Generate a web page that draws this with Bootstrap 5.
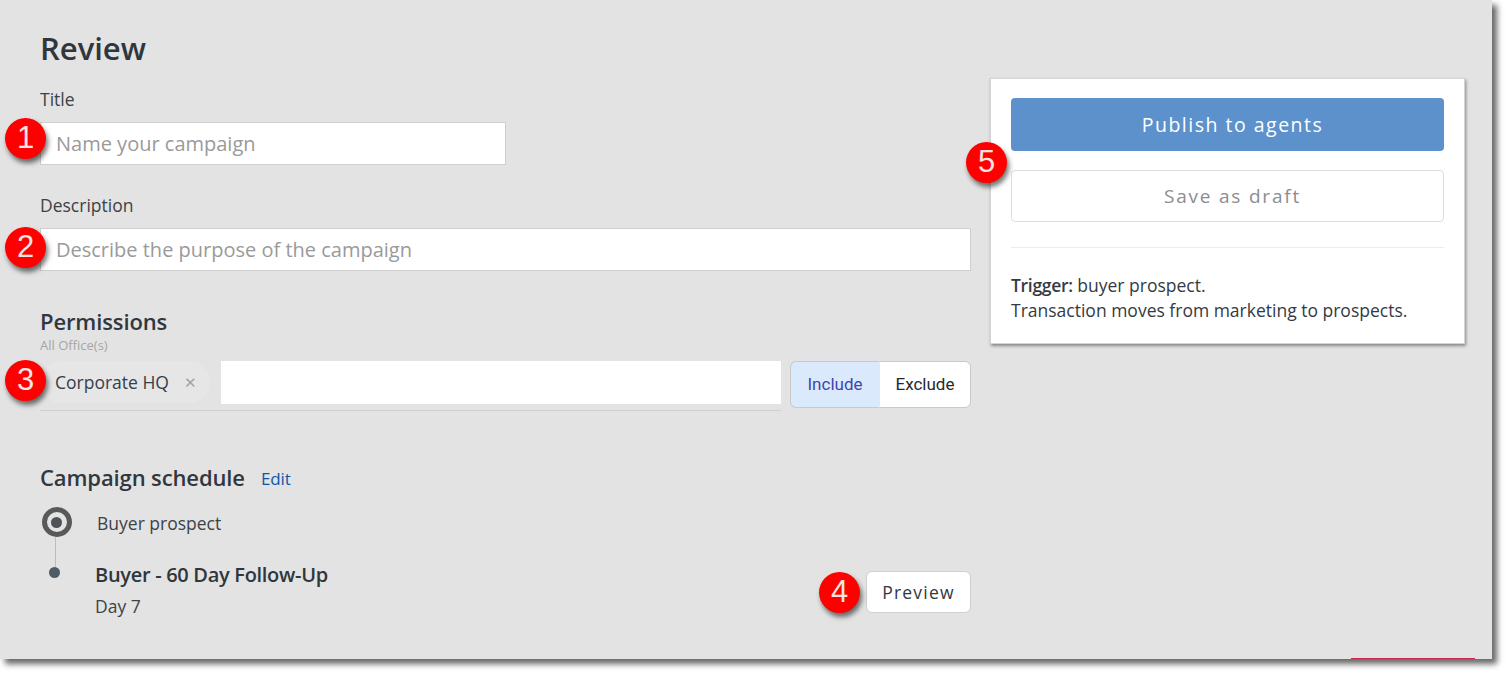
<!DOCTYPE html>
<html lang="en">
<head>
  <meta charset="UTF-8">
  <title>Review</title>
  <meta name="viewport" content="width=device-width, initial-scale=1">
  <link href="https://cdn.jsdelivr.net/npm/bootstrap@5.3.2/dist/css/bootstrap.min.css" rel="stylesheet">
  <style>
    html, body { height: 100%; }
    body { background: #fff; font-family: "Open Sans", sans-serif; color: #333a40; overflow: hidden; }
    .sheet { position: relative; width: 1492px; height: 659px; background: #e3e3e3; box-shadow: 5px 5px 6px rgba(0,0,0,.6); padding: 28px 0 0 40px; gap: 19px; }
    .left-col { width: 931px; }
    .page-title { font-size: 31px; font-weight: 600; line-height: 41px; margin: 0 0 18px; color: #2f373d; }
    .field-label { font-size: 17.5px; line-height: 24px; margin: 0 0 11px; color: #3d4145; display: block; }
    .plain-input { height: 43px; border: 1px solid #cfcfcf; border-radius: 0; font-size: 20px; padding: 0 15px; font-family: "Open Sans", sans-serif; box-shadow: none; }
    .plain-input::placeholder { color: #9a9a9a; opacity: 1; }
    .w-title { width: 466px; margin-bottom: 28px; }
    .w-desc { width: 100%; margin-bottom: 35px; }
    .sect-title { font-size: 22px; font-weight: 600; line-height: 30px; letter-spacing: -.12px; margin: 0; color: #30383e; }
    .sub-note { font-size: 13px; line-height: 15px; color: #a6a6a6; margin-bottom: 8px; margin-top: 2px; }
    .picker { width: 741px; height: 50px; border-bottom: 1px solid #cfcfcf; }
    .chip { height: 42px; width: 170px; background: #e6e6e6; border-radius: 21px; font-size: 17.5px; padding: 0 0 0 15px; color: #333f4a; flex: none; }
    .chip-x { color: #a3a3a3; font-size: 15px; margin-left: 15px; line-height: 1; }
    .picker-box { height: 43px; background: #fff; flex: 1; margin-left: 11px; }
    .mode-group .btn { font-family: Roboto, sans-serif; font-size: 17px; height: 47px; padding: 0; background: #fff; border-color: #c9c9c9; color: #26292c; }
    .mode-group .btn.active { background: #dbe9fd; color: #3a47ad; border-color: #c9c9c9; border-right-color: #dbe9fd; width: 90px; }
    .mode-group .btn.other { width: 92px; }
    .sched-head { margin-top: 51px; margin-bottom: 15px; }
    .edit-link { font-size: 17px; font-weight: 500; color: #0e57a8; text-decoration: none; margin: 3px 0 0 16px; letter-spacing: -.1px; }
    .rail { width: 31px; flex: none; }
    .rail-first { margin-left: 1px; }
    .ring { width: 30px; height: 30px; border: 5px solid #58595b; border-radius: 50%; }
    .ring span { width: 11px; height: 11px; background: #4f5257; border-radius: 50%; display: block; }
    .rail-line { width: 1px; height: 31px; background: #bdbdbd; margin-left: -3px; }
    .dot-step { width: 11px; height: 11px; background: #4f5b66; border-radius: 50%; margin: 6px 0 0 -2px; }
    .trig-name { font-size: 17.5px; line-height: 24px; margin-left: 25px; margin-top: 4px; color: #3e4246; }
    .step-row { margin-top: -7px; }
    .step-name { font-size: 20px; font-weight: 600; line-height: 28px; letter-spacing: -.3px; margin-left: 24px; color: #30363c; }
    .step-day { font-size: 17.5px; line-height: 24px; margin: 5px 0 0 24px; color: #3e4246; }
    .preview-btn { width: 105px; height: 42px; margin-top: 10px; background: #fff; border: 1px solid #cfcfcf; font-size: 17.5px; letter-spacing: 1.2px; color: #33383d; padding: 0; }
    .side-card { width: 475px; height: 266px; margin-top: 50px; border: 1px solid #d4d4d4; border-radius: 0; box-shadow: 1px 2px 3px rgba(0,0,0,.4); padding: 19px 20px; }
    .btn-publish { height: 53px; width: 100%; padding: 0 0 0 10px; background: #5d91cc; color: #fff; border: 0; font-size: 19.5px; font-weight: 500; letter-spacing: 1.5px; border-radius: 4px; }
    .btn-publish:hover { background: #5d91cc; color: #fff; }
    .btn-draft { height: 52px; width: 100%; margin-top: 19px; padding: 0 0 0 10px; background: #fff; color: #8a8d90; border: 1px solid #dedede; font-size: 19px; letter-spacing: 1.8px; border-radius: 4px; }
    .side-rule { margin: 25px 0 25px; border-color: #ececec; opacity: 1; }
    .side-text { font-size: 17.5px; line-height: 25px; color: #333a44; }
    .side-text strong { font-weight: 600; letter-spacing: -.3px; }
    .callout { position: absolute; width: 41px; height: 41px; border-radius: 50%; background: #fe0000; color: #f3e3e3; font-family: "Liberation Sans", sans-serif; font-size: 31px; box-shadow: 2px 4px 5px rgba(0,0,0,.55); }
    .c1 { left: 5px; top: 118px; }
    .c2 { left: 5px; top: 227px; }
    .c3 { left: 5px; top: 360px; }
    .c4 { left: 819px; top: 572px; }
    .c5 { left: 966px; top: 142px; }
    .red-edge { position: absolute; left: 1351px; bottom: 0; width: 124px; height: 1px; background: #c8274e; }
  </style>
</head>
<body>
  <div class="sheet d-flex align-items-start">
    <div class="left-col">
      <h1 class="page-title">Review</h1>

      <label class="field-label" for="campTitle">Title</label>
      <input id="campTitle" class="form-control plain-input w-title" type="text" placeholder="Name your campaign">

      <label class="field-label" for="campDesc">Description</label>
      <input id="campDesc" class="form-control plain-input w-desc" type="text" placeholder="Describe the purpose of the campaign">

      <h2 class="sect-title">Permissions</h2>
      <div class="sub-note">All Office(s)</div>
      <div class="d-flex justify-content-between align-items-start">
        <div class="picker d-flex align-items-start">
          <div class="chip d-flex align-items-center">Corporate HQ<span class="chip-x">&#x2715;</span></div>
          <div class="picker-box"></div>
        </div>
        <div class="btn-group mode-group">
          <button type="button" class="btn active">Include</button>
          <button type="button" class="btn other">Exclude</button>
        </div>
      </div>

      <div class="sched-head d-flex align-items-center">
        <h2 class="sect-title">Campaign schedule</h2>
        <a class="edit-link" href="#">Edit</a>
      </div>

      <div class="d-flex">
        <div class="rail rail-first d-flex flex-column align-items-center">
          <div class="ring d-flex align-items-center justify-content-center"><span></span></div>
          <div class="rail-line"></div>
        </div>
        <div class="trig-name">Buyer prospect</div>
      </div>
      <div class="step-row d-flex justify-content-between align-items-start">
        <div class="d-flex">
          <div class="rail d-flex justify-content-center"><div class="dot-step"></div></div>
          <div>
            <div class="step-name">Buyer - 60 Day Follow-Up</div>
            <div class="step-day">Day 7</div>
          </div>
        </div>
        <button type="button" class="btn preview-btn">Preview</button>
      </div>
    </div>

    <div class="card side-card">
      <button type="button" class="btn btn-publish">Publish to agents</button>
      <button type="button" class="btn btn-draft">Save as draft</button>
      <hr class="side-rule">
      <div class="side-text"><strong>Trigger:</strong> buyer prospect.<br>Transaction moves from marketing to prospects.</div>
    </div>

    <div class="callout c1 d-flex align-items-center justify-content-center">1</div>
    <div class="callout c2 d-flex align-items-center justify-content-center">2</div>
    <div class="callout c3 d-flex align-items-center justify-content-center">3</div>
    <div class="callout c4 d-flex align-items-center justify-content-center">4</div>
    <div class="callout c5 d-flex align-items-center justify-content-center">5</div>
    <div class="red-edge"></div>
  </div>
  <script src="https://cdn.jsdelivr.net/npm/bootstrap@5.3.2/dist/js/bootstrap.bundle.min.js"></script>
</body>
</html>
